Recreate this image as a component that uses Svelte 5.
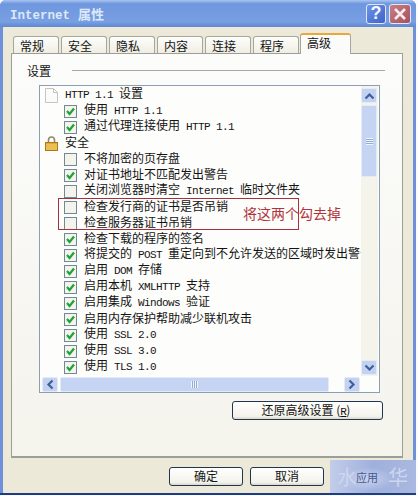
<script>
const tabs = ['常规', '安全', '隐私', '内容', '连接', '程序', '高级'];

// icon: page / lock are headings, otherwise it's a checkbox row
const rows = [
    { text: 'HTTP 1.1 设置', icon: 'page' },
    { text: '使用 HTTP 1.1', on: true },
    { text: '通过代理连接使用 HTTP 1.1', on: true },
    { text: '安全', icon: 'lock' },
    { text: '不将加密的页存盘', on: false },
    { text: '对证书地址不匹配发出警告', on: true },
    { text: '关闭浏览器时清空 Internet 临时文件夹', on: false },
    { text: '检查发行商的证书是否吊销', on: false },
    { text: '检查服务器证书吊销', on: false },
    { text: '检查下载的程序的签名', on: true },
    { text: '将提交的 POST 重定向到不允许发送的区域时发出警告', on: true },
    { text: '启用 DOM 存储', on: true },
    { text: '启用本机 XMLHTTP 支持', on: true },
    { text: '启用集成 Windows 验证', on: true },
    { text: '启用内存保护帮助减少联机攻击', on: true },
    { text: '使用 SSL 2.0', on: true },
    { text: '使用 SSL 3.0', on: true },
    { text: '使用 TLS 1.0', on: true }
];

//Latin runs get a smaller mono size so they sit at half the CJK width
const parts = (text) => text.split(/([\x20-\x7e]+)/).filter(Boolean);
const isLatin = (s) => /^[\x20-\x7e]+$/.test(s);
</script>

<div class="window">
    <div class="titlebar">
        <div class="title"><span class="title-lat">Internet</span> 属性</div>
        <div class="help">?</div>
        <div class="close">
            <svg width="14" height="14" viewBox="0 0 14 14"><path d="M2 2 L12 12 M12 2 L2 12" stroke="#f6ecec" stroke-width="2.6" /></svg>
        </div>
    </div>

    <div class="client">
        <div class="tabs">
            {#each tabs as tab, i}
                <div class="tab" class:active={i === tabs.length - 1}>{tab}</div>
            {/each}
        </div>

        <div class="panel">
            <div class="group">
                <span>设置</span>
                <div class="rule"></div>
            </div>

            <div class="list">
                <div class="list-top">
                    <div class="rows">
                        {#each rows as row}
                            <div class="row" class:head={row.icon}>
                                {#if row.icon === 'page'}
                                    <svg class="icon" width="13" height="15" viewBox="0 0 13 15">
                                        <path d="M0.5 0.5 H8.5 L12.5 4.5 V14.5 H0.5 Z" fill="#fbfbfb" stroke="#c4c4c4" />
                                        <path d="M8.5 0.5 V4.5 H12.5" fill="none" stroke="#c4c4c4" />
                                    </svg>
                                {:else if row.icon === 'lock'}
                                    <svg class="icon" width="13" height="15" viewBox="0 0 13 15">
                                        <path d="M3.5 7 V4 Q3.5 1 6.5 1 Q9.5 1 9.5 4 V7" fill="none" stroke="#8f8a6a" stroke-width="1.6" />
                                        <rect x="0.5" y="6.5" width="12" height="8" fill="#e3a92c" stroke="#a9791c" />
                                        <path d="M1 9 H12 M1 11 H12 M1 13 H12" stroke="#f4d572" />
                                    </svg>
                                {:else}
                                    <div class="check">
                                        {#if row.on}
                                            <svg width="11" height="11" viewBox="0 0 11 11"><path d="M2 5 L4.6 8 L9 2.6" fill="none" stroke="#22a33a" stroke-width="2.3" /></svg>
                                        {/if}
                                    </div>
                                {/if}
                                <span class="label">
                                    {#each parts(row.text) as p}
                                        {#if isLatin(p)}<span class="lat">{p}</span>{:else}{p}{/if}
                                    {/each}
                                </span>
                            </div>
                        {/each}
                    </div>

                    <div class="vscroll">
                        <div class="sbtn">
                            <svg width="11" height="8" viewBox="0 0 11 8"><path d="M1.5 6.5 L5.5 2.5 L9.5 6.5" fill="none" stroke="#3f5f98" stroke-width="2.2" /></svg>
                        </div>
                        <div class="vthumb">
                            <div class="vgrip"></div>
                        </div>
                        <div class="vfill"></div>
                        <div class="sbtn">
                            <svg width="11" height="8" viewBox="0 0 11 8"><path d="M1.5 1.5 L5.5 5.5 L9.5 1.5" fill="none" stroke="#3f5f98" stroke-width="2.2" /></svg>
                        </div>
                    </div>
                </div>

                <div class="hscroll">
                    <div class="sbtn">
                        <svg width="8" height="11" viewBox="0 0 8 11"><path d="M6.5 1.5 L2.5 5.5 L6.5 9.5" fill="none" stroke="#3f5f98" stroke-width="2.2" /></svg>
                    </div>
                    <div class="hthumb">
                        <div class="hgrip"></div>
                    </div>
                    <div class="hfill"></div>
                    <div class="sbtn">
                        <svg width="8" height="11" viewBox="0 0 8 11"><path d="M1.5 1.5 L5.5 5.5 L1.5 9.5" fill="none" stroke="#3f5f98" stroke-width="2.2" /></svg>
                    </div>
                </div>
            </div>

            <div class="reset-row">
                <button class="reset">还原高级设置 (<span class="lat u">R</span>)</button>
            </div>
        </div>

        <div class="actions">
            <button>确定</button>
            <button>取消</button>
        </div>
    </div>

    <!-- red note drawn over the screenshot -->
    <div class="note-box"></div>
    <div class="note">将这两个勾去掉</div>

    <div class="stamp">
        <span class="s1">水</span>
        <span class="s2">应用</span>
        <span class="s3">华</span>
    </div>
</div>

<style>
:global(body) {
    background: #fbfbfd;
    overflow: hidden;
}

.window {
    position: relative;
    width: 416px;
    height: 495px;
    display: flex;
    flex-direction: column;
    box-sizing: border-box;
    background: #6f8fd8;
    border-bottom: 2px solid #1f3d86;
    border-radius: 6px 6px 0 0;
    font-family: "Noto Sans CJK SC", sans-serif;
    font-size: 12px;
    color: #141414;
}

.titlebar {
    height: 27px;
    flex: none;
    display: flex;
    align-items: center;
    padding: 0 5px 0 10px;
    background: linear-gradient(#a9c5f2, #6f97de 14%, #789fe2 80%, #5f88d2);
    border-radius: 6px 6px 0 0;
}

.title {
    flex: 1;
    color: #dde8f8;
    font-weight: 700;
    font-size: 13px;
}

.title-lat {
    font-family: "Liberation Mono", monospace;
    font-size: 12.5px;
    margin-right: 5px;
}

.help, .close {
    width: 20px;
    height: 20px;
    border: 1px solid #dfe8f8;
    border-radius: 3px;
    display: flex;
    align-items: center;
    justify-content: center;
    box-sizing: border-box;
}

.help {
    margin-right: 3px;
    background: linear-gradient(135deg, #6f95e6, #3b62c8);
    color: #f2f6ff;
    font-family: "Liberation Sans", sans-serif;
    font-weight: 700;
    font-size: 18px;
}

.close {
    width: 22px;
    background: linear-gradient(135deg, #c77f85, #a8505c);
}

.client {
    flex: 1;
    margin: 0 3px;
    padding: 6px 10px 0 8px;
    display: flex;
    flex-direction: column;
    background: #ece9d8;
}

.tabs {
    height: 20px;
    flex: none;
    display: flex;
    align-items: flex-end;
    gap: 2px;
    padding-left: 2px;
    position: relative;
    z-index: 1;
}

.tab {
    width: 46px;
    height: 17px;
    box-sizing: border-box;
    padding-left: 6px;
    border: 1px solid #a5a79f;
    border-bottom: none;
    border-radius: 3px 3px 0 0;
    background: linear-gradient(#fdfdfb, #f0eee3);
    line-height: 17px;
}

.tab.active {
    width: 51px;
    height: 21px;
    margin-left: -1px;
    margin-bottom: -1px;
    background: #fbfbf9;
    border-top: 2px solid #e9a83c;
    line-height: 16px;
}

.panel {
    height: 405px;
    flex: none;
    box-sizing: border-box;
    padding: 7px 0 0 15px;
    border: 1px solid #9c9e98;
    border-bottom-width: 2px;
    background: linear-gradient(#fcfcfb, #f4f3ec);
}

.group {
    height: 18px;
    display: flex;
    align-items: center;
    gap: 21px;
    padding-right: 17px;
}

.rule {
    flex: 1;
    border-top: 1px solid #a9a99f;
}

.list {
    width: 341px;
    height: 308px;
    box-sizing: border-box;
    margin: 6px 0 0 12px;
    border: 1px solid #8b9fb3;
    background: #fdfdfb;
    display: flex;
    flex-direction: column;
}

.list-top {
    flex: 1;
    min-height: 0;
    display: flex;
}

.rows {
    flex: 1;
    min-width: 0;
    overflow: hidden;
    padding-top: 1px;
}

.row {
    height: 16px;
    display: flex;
    align-items: center;
    gap: 7px;
    padding-left: 24px;
    white-space: nowrap;
}

.row.head {
    padding-left: 5px;
}

.icon {
    flex: none;
}

.check {
    width: 13px;
    height: 13px;
    flex: none;
    box-sizing: border-box;
    border: 1px solid #6f8a96;
    background: #f4f4ec;
    display: flex;
    align-items: center;
    justify-content: center;
}

.label {
    line-height: 14px;
    margin-bottom: 2px;
}

.lat {
    font-family: "Liberation Mono", monospace;
    font-size: 11px;
    letter-spacing: -0.6px;
    white-space: pre;
}

.u {
    text-decoration: underline;
}

.vscroll {
    width: 17px;
    flex: none;
    margin-right: 1px;
    padding: 2px 0 1px;
    display: flex;
    flex-direction: column;
    gap: 2px;
    background: #f5f4ea;
}

.sbtn {
    flex: none;
    width: 16px;
    height: 15px;
    box-sizing: border-box;
    border: 1px solid #e4ebf7;
    border-radius: 2px;
    background: #c3d2f2;
    display: flex;
    align-items: center;
    justify-content: center;
}

.vthumb {
    height: 72px;
    flex: none;
    width: 16px;
    box-sizing: border-box;
    border: 1px solid #e4ebf7;
    border-radius: 2px;
    background: #c6d4f4;
    display: flex;
    align-items: center;
    justify-content: center;
}

.vgrip {
    width: 7px;
    height: 7px;
    background: repeating-linear-gradient(#f0f4fc 0 1px, #97a9cf 1px 2px);
}

.vfill {
    flex: 1;
}

.hscroll {
    height: 15px;
    flex: none;
    margin: 1px 19px 0 2px;
    display: flex;
    gap: 2px;
}

.hthumb {
    width: 269px;
    flex: none;
    box-sizing: border-box;
    border: 1px solid #e4ebf7;
    border-radius: 2px;
    background: #c6d4f4;
    display: flex;
    align-items: center;
    justify-content: center;
}

.hgrip {
    width: 7px;
    height: 7px;
    background: repeating-linear-gradient(90deg, #f0f4fc 0 1px, #97a9cf 1px 2px);
}

.hfill {
    flex: 1;
}

.reset-row {
    display: flex;
    justify-content: flex-end;
    padding: 8px 19px 0 0;
}

button {
    width: 74px;
    height: 19px;
    padding: 0 0 2px;
    box-sizing: border-box;
    border: 1px solid #1f3550;
    border-radius: 3px;
    background: linear-gradient(#fff, #f3f2ea 85%, #d9d6c8);
    font: inherit;
    color: #141414;
    line-height: 15px;
}

.reset {
    width: 151px;
    padding-right: 3px;
}

.actions {
    display: flex;
    justify-content: flex-end;
    gap: 7px;
    padding: 9px 79px 0 0;
}

.note-box {
    position: absolute;
    left: 58px;
    top: 198px;
    width: 241px;
    height: 32px;
    box-sizing: border-box;
    border: 1px solid #a8303c;
}

.note {
    position: absolute;
    left: 243px;
    top: 203px;
    font-size: 14px;
    line-height: 20px;
    color: #b2343a;
}

.stamp {
    position: absolute;
    left: 330px;
    top: 460px;
    width: 86px;
    height: 33px;
    background:
        radial-gradient(ellipse 26px 12px at 44% 58%, #c9d3ee, transparent),
        linear-gradient(90deg, #c3cdea, #9fb0dc 50%, #a9b8e0);
}

.stamp span {
    position: absolute;
}

.s1, .s3 {
    top: 5px;
    font-size: 20px;
    line-height: 24px;
    color: #ccd6ef;
}

.s1 {
    left: 7px;
}

.s3 {
    left: 58px;
}

.s2 {
    left: 26px;
    top: 10px;
    font-size: 11px;
    line-height: 14px;
    color: #47588f;
}
</style>
